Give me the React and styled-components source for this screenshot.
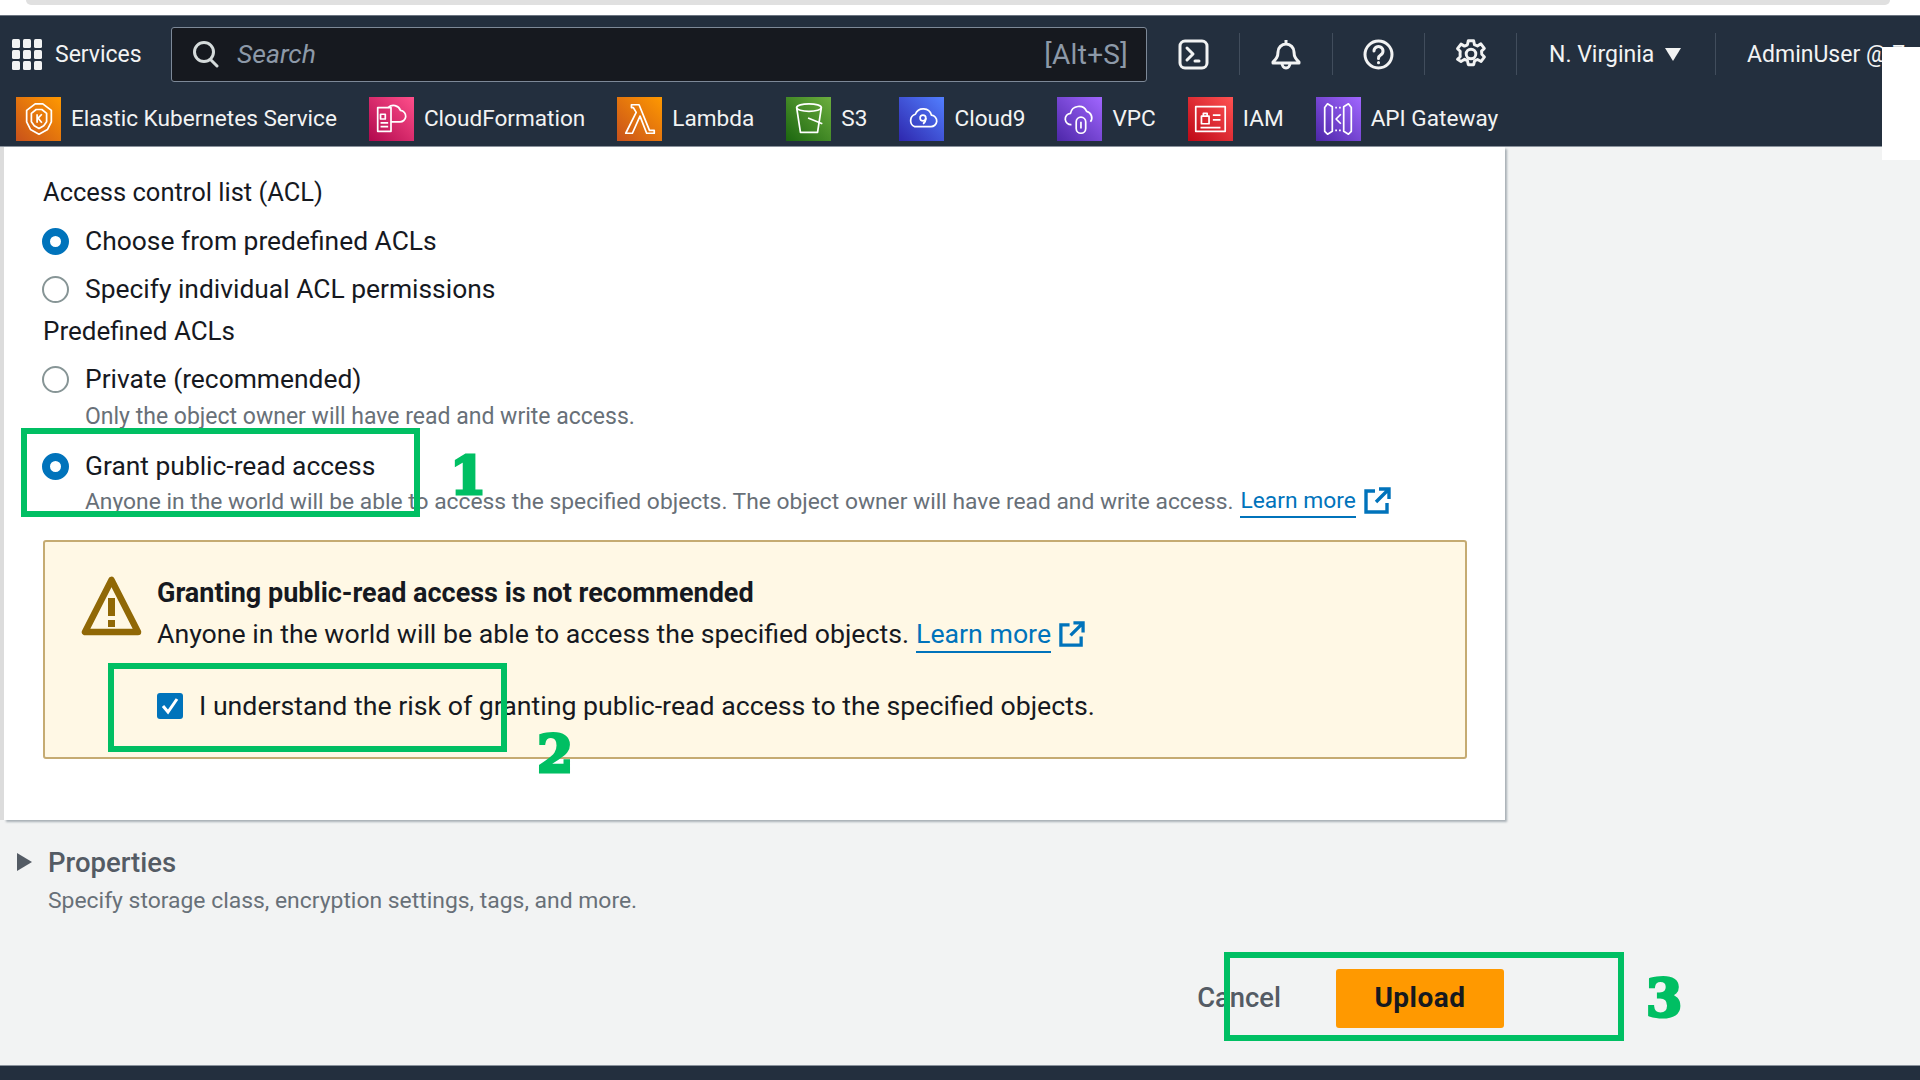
import React from 'react';
import styled, { createGlobalStyle } from 'styled-components';

const GlobalStyle = createGlobalStyle`
  html, body { margin: 0; padding: 0; background: #f2f3f3; }
  body { font-family: Roboto, "Noto Sans", "Liberation Sans", sans-serif; }
`;

const Page = styled.div`
  position: relative;
  width: 1920px;
  height: 1080px;
  overflow: hidden;
  background: #f2f3f3;
  display: flex;
  flex-direction: column;
`;

const TopStrip = styled.div`
  height: 15px;
  flex: none;
  background: #fff;
  padding: 0 30px 0 26px;
  box-sizing: border-box;
`;

const StripBar = styled.div`
  height: 5px;
  background: #e0e0e0;
  border-radius: 0 0 10px 10px;
`;

const Nav = styled.header`
  flex: none;
  height: 132px;
  background: #232f3e;
  border-top: 1px solid #6b7480;
  border-bottom: 1px solid #8a929c;
  box-sizing: border-box;
  color: #f2f3f3;
`;

const NavTop = styled.div`
  height: 76px;
  display: flex;
  align-items: center;
  padding-left: 12px;
`;

const Services = styled.div`
  width: 159px;
  flex: none;
  display: flex;
  align-items: center;
  gap: 13px;
  font-size: 23px;
`;

const SearchBox = styled.div`
  width: 976px;
  height: 55px;
  flex: none;
  box-sizing: border-box;
  background: #16191f;
  border: 1.5px solid #7d8998;
  border-radius: 3px;
  display: flex;
  align-items: center;
  padding: 0 18px 0 20px;
  gap: 18px;
`;

const SearchHint = styled.span`
  flex: 1;
  font-size: 26.5px;
  font-style: italic;
  color: #8d99a8;
  margin-bottom: 2px;
`;

const Shortcut = styled.span`
  font-size: 28px;
  letter-spacing: 0.3px;
  color: #8d99a8;
`;

const IconCell = styled.div`
  width: ${p => p.$w}px;
  height: 42px;
  flex: none;
  box-sizing: border-box;
  display: flex;
  align-items: center;
  justify-content: center;
  border-right: 1px solid #414d5c;
`;

const Region = styled.div`
  width: 199px;
  height: 42px;
  flex: none;
  box-sizing: border-box;
  padding-left: 32px;
  display: flex;
  align-items: center;
  gap: 11px;
  font-size: 23px;
  border-right: 1px solid #414d5c;
`;

const Caret = styled.span`
  width: 0;
  height: 0;
  border-left: 8px solid transparent;
  border-right: 8px solid transparent;
  border-top: 13px solid #f2f3f3;
`;

const UserName = styled.div`
  padding-left: 31px;
  font-size: 23px;
  white-space: nowrap;
`;

const Shortcuts = styled.div`
  height: 54px;
  display: flex;
  align-items: center;
  padding-left: 16px;
  gap: 32px;
`;

const ShortcutItem = styled.div`
  display: flex;
  align-items: center;
  gap: 10px;
  font-size: 22.6px;
  white-space: nowrap;
`;

const ShortcutLabel = styled.span`
  margin-bottom: 2px;
`;

const ServiceTile = styled.div`
  width: 45px;
  height: 44px;
  flex: none;
  display: flex;
  align-items: center;
  justify-content: center;
  background: linear-gradient(45deg, ${p => p.$from}, ${p => p.$to});
`;

const Panel = styled.section`
  flex: none;
  width: 1501px;
  height: 673px;
  margin-left: 4px;
  box-sizing: border-box;
  background: #fff;
  box-shadow: 2px 2px 2px #a9b0b6, -4px 0 0 #dcdcdc;
  padding: 25px 38px 0 39px;
`;

const Label = styled.div`
  height: 40px;
  margin-top: ${p => p.$top || 0}px;
  display: flex;
  align-items: center;
  font-size: ${p => p.$size}px;
  color: #16191f;
`;

const RadioRow = styled.div`
  height: 40px;
  margin-top: ${p => p.$top || 0}px;
  display: flex;
  align-items: center;
  gap: 16px;
  margin-left: -1px;
  font-size: 26.4px;
  color: #16191f;
`;

const Radio = styled.span`
  width: 27px;
  height: 27px;
  flex: none;
  box-sizing: border-box;
  border-radius: 50%;
  background: #fff;
  border: ${p => (p.$on ? '8px solid #0073bb' : '2px solid #879596')};
`;

const Hint = styled.div`
  height: 30px;
  margin-top: ${p => p.$top || 0}px;
  padding-left: 42px;
  display: flex;
  align-items: center;
  font-size: ${p => p.$size}px;
  color: #687078;
  white-space: nowrap;
`;

const Link = styled.span`
  color: #0073bb;
  border-bottom: 2px solid #0073bb;
  line-height: 1.3em;
  padding-top: 2px;
  margin-left: 7px;
`;

const LinkIcon = styled.svg`
  margin-left: 7px;
  flex: none;
`;

const Alert = styled.div`
  height: 219px;
  margin-top: 24px;
  box-sizing: border-box;
  background: #fff8e5;
  border: 2px solid #c5ab72;
  border-radius: 3px;
  padding: 32px 0 0 36px;
  display: grid;
  grid-template-columns: 61px 1fr;
  column-gap: 15px;
  align-content: start;
`;

const AlertBody = styled.div`
  display: flex;
  flex-direction: column;
`;

const AlertTitle = styled.div`
  height: 38px;
  display: flex;
  align-items: center;
  font-size: 27px;
  font-weight: 700;
  color: #16191f;
`;

const AlertText = styled.div`
  height: 44px;
  display: flex;
  align-items: center;
  font-size: 26.7px;
  color: #16191f;
`;

const CheckRow = styled.div`
  height: 40px;
  margin-top: 30px;
  display: flex;
  align-items: center;
  gap: 16px;
  font-size: 26.7px;
  color: #16191f;
`;

const CheckBox = styled.span`
  width: 26px;
  height: 26px;
  flex: none;
  border-radius: 3px;
  background: #0073bb;
  display: flex;
  align-items: center;
  justify-content: center;
`;

const Properties = styled.div`
  flex: none;
  height: 100px;
  padding: 22px 0 0 17px;
  box-sizing: border-box;
`;

const PropTitle = styled.div`
  height: 40px;
  display: flex;
  align-items: center;
  gap: 16px;
  font-size: 27.5px;
  font-weight: 500;
  color: #545b64;
`;

const PropArrow = styled.span`
  width: 0;
  height: 0;
  border-top: 9px solid transparent;
  border-bottom: 9px solid transparent;
  border-left: 15px solid #545b64;
`;

const PropHint = styled.div`
  height: 36px;
  padding-left: 31px;
  display: flex;
  align-items: center;
  font-size: 22.9px;
  color: #687078;
`;

const Actions = styled.div`
  flex: none;
  width: 1504px;
  margin-top: 49px;
  display: flex;
  justify-content: flex-end;
  align-items: center;
  gap: 55px;
`;

const CancelText = styled.span`
  font-size: 27.4px;
  font-weight: 500;
  color: #545b64;
  margin-bottom: 2px;
`;

const UploadButton = styled.div`
  width: 168px;
  height: 59px;
  box-sizing: border-box;
  padding-bottom: 2px;
  border-radius: 3px;
  background: #ff9900;
  color: #16191f;
  font-size: 28px;
  letter-spacing: 0.5px;
  font-weight: 700;
  display: flex;
  align-items: center;
  justify-content: center;
`;

const Footer = styled.footer`
  position: absolute;
  left: 0;
  right: 0;
  bottom: 0;
  height: 15px;
  box-sizing: border-box;
  background: #232f3e;
  border-top: 1px solid #8a929c;
`;

const Mask = styled.div`
  position: absolute;
  left: 1882px;
  top: 47px;
  width: 38px;
  height: 113px;
  background: #fff;
`;

const GreenBox = styled.div`
  position: absolute;
  left: ${p => p.$x}px;
  top: ${p => p.$y}px;
  width: ${p => p.$w}px;
  height: ${p => p.$h}px;
  box-sizing: border-box;
  border: 6px solid #00bf63;
`;

const Step = styled.div`
  position: absolute;
  left: ${p => p.$x}px;
  top: ${p => p.$y}px;
  font-family: "DejaVu Serif", serif;
  font-weight: 700;
  font-size: 52px;
  line-height: 26px;
  color: #00bf63;
  -webkit-text-stroke: 3px #00bf63;
`;

const shortcuts = [
  ['Elastic Kubernetes Service', '#c8511b', '#ff9900', 'eks'],
  ['CloudFormation', '#b0084d', '#ff4f8b', 'cfn'],
  ['Lambda', '#c8511b', '#ff9900', 'lambda'],
  ['S3', '#1b660f', '#6cae3e', 's3'],
  ['Cloud9', '#2e27ad', '#527fff', 'cloud9'],
  ['VPC', '#4d27a8', '#a166ff', 'vpc'],
  ['IAM', '#bd0816', '#ff5252', 'iam'],
  ['API Gateway', '#4d27a8', '#a166ff', 'api'],
];

const glyphs = {
  eks: (
    <>
      <path d="M16 5h8l9 7v12l-4 8-9 5-9-5-4-8V12z" />
      <path d="M17 11h6l5 4v9l-3 4-5 3-5-3-3-4v-9z" />
      <path d="M18 16v9M23 16l-4 4 4 5" />
    </>
  ),
  cfn: (
    <>
      <rect x="6" y="9" width="14" height="25" />
      <path d="M9 16h5v5H9zM9 25h8M9 29h8" />
      <path d="M20 24h9a6 6 0 0 0 1-12 8 8 0 0 0-13-3" />
    </>
  ),
  lambda: <path d="M11 6h8l11 27h5v3h-8L20 18l-8 18H5l11-22-3-5h-2z" />,
  s3: (
    <>
      <ellipse cx="20" cy="9" rx="13" ry="4" />
      <path d="M7 9l4 26h18l4-26" />
      <path d="M19 20l15 6" />
    </>
  ),
  cloud9: (
    <>
      <path d="M12 29h17a6 6 0 0 0 1-12 9 9 0 0 0-17-1 7 7 0 0 0-1 13z" />
      <circle cx="21" cy="20" r="3" />
      <path d="M24 20c0 3-1 5-3 6" />
    </>
  ),
  vpc: (
    <>
      <path d="M11 27a6 6 0 0 1-1-12 9 9 0 0 1 17-2 7 7 0 0 1 4 11" />
      <rect x="16" y="19" width="10" height="17" rx="5" />
      <path d="M21 24v7" />
    </>
  ),
  iam: (
    <>
      <rect x="5" y="8" width="31" height="26" />
      <rect x="11" y="18" width="8" height="8" />
      <path d="M13 18v-3h4v3M23 17h8M23 22h8M10 30h21" />
    </>
  ),
  api: (
    <>
      <path d="M9 5l5 3v26l-5 3-3-3V9zM31 5l-5 3v26l5 3 3-3V9z" />
      <path d="M18 8v2M22 8v2M18 32v2M22 32v2M23 16l-5 5 5 5" />
    </>
  ),
};

function ServiceGlyph({ name }) {
  return (
    <svg width="38" height="40" viewBox="0 0 40 42" fill="none" stroke="#fff" strokeWidth="1.8" strokeLinejoin="round">
      {glyphs[name]}
    </svg>
  );
}

function GridIcon() {
  const cells = [0, 11, 22];
  return (
    <svg width="30" height="31" viewBox="0 0 30 31" fill="#f2f3f3">
      {cells.map(y => cells.map(x => <rect key={`${x}-${y}`} x={x} y={y} width="8" height="9" rx="1.5" />))}
    </svg>
  );
}

function SearchIcon() {
  return (
    <svg width="27" height="28" viewBox="0 0 27 28" fill="none" stroke="#d5dbdb" strokeWidth="3" strokeLinecap="round">
      <circle cx="12" cy="12" r="9.5" />
      <path d="M19 20l6 6" />
    </svg>
  );
}

function TerminalIcon() {
  return (
    <svg width="31" height="31" viewBox="0 0 31 31" fill="none" stroke="#f2f3f3" strokeWidth="3" strokeLinecap="round" strokeLinejoin="round">
      <rect x="2" y="2" width="27" height="27" rx="5" />
      <path d="M9 9l6 6-6 6M17 22h4" />
    </svg>
  );
}

function BellIcon() {
  return (
    <svg width="32" height="32" viewBox="0 0 32 32" fill="none" stroke="#f2f3f3" strokeWidth="3" strokeLinejoin="round">
      <path d="M16 2v3M8 14a8 8 0 0 1 16 0c0 5 2 7 5 10v1H3v-1c3-3 5-5 5-10z" />
      <path d="M12 25a4 5 0 0 0 8 0" />
    </svg>
  );
}

function HelpIcon() {
  return (
    <svg width="31" height="31" viewBox="0 0 31 31" fill="none" stroke="#f2f3f3" strokeWidth="3" strokeLinecap="round">
      <circle cx="15.5" cy="15.5" r="13.5" />
      <path d="M11 12a4.5 4.5 0 1 1 6.8 3.9c-1.6 1-2.3 1.8-2.3 3.6" />
      <path d="M15.5 23.5v.3" />
    </svg>
  );
}

function GearIcon() {
  return (
    <svg width="32" height="32" viewBox="0 0 24 24" fill="none" stroke="#f2f3f3" strokeWidth="2.2" strokeLinejoin="round">
      <path d="M10 2h4l.6 3 2.2 1 2.6-1.6 2.6 3.4-2.1 2 .1 1.2.1 1.2 2 2-2.5 3.4-2.7-1.5-2.2 1-.7 2.9h-4l-.7-3-2.1-1-2.7 1.6L1.9 16l2-2-.1-2 .1-2-2-2 2.6-3.4 2.6 1.5 2.2-1z" />
      <circle cx="12" cy="12" r="3.6" />
    </svg>
  );
}

function ExternalIcon({ size }) {
  return (
    <LinkIcon width={size} height={size} viewBox="0 0 28 28" fill="none" stroke="#0073bb" strokeWidth="3.4">
      <path d="M12 4H3v21h21v-9" />
      <path d="M13 15L25 3M16 2h10v10" />
    </LinkIcon>
  );
}

function WarningIcon() {
  return (
    <svg width="61" height="62" viewBox="0 0 61 62" fill="none">
      <path d="M30.5 6L4 58h53z" stroke="#906806" strokeWidth="6.5" strokeLinejoin="round" />
      <rect x="27" y="24" width="7" height="18" fill="#906806" />
      <rect x="27" y="46" width="7" height="7" fill="#906806" />
    </svg>
  );
}

export default function App() {
  return (
    <Page>
      <GlobalStyle />
      <TopStrip><StripBar /></TopStrip>
      <Nav>
        <NavTop>
          <Services><GridIcon />Services</Services>
          <SearchBox>
            <SearchIcon />
            <SearchHint>Search</SearchHint>
            <Shortcut>[Alt+S]</Shortcut>
          </SearchBox>
          <IconCell $w={93}><TerminalIcon /></IconCell>
          <IconCell $w={93}><BellIcon /></IconCell>
          <IconCell $w={92}><HelpIcon /></IconCell>
          <IconCell $w={92}><GearIcon /></IconCell>
          <Region>N. Virginia<Caret /></Region>
          <UserName>AdminUser @ 7</UserName>
        </NavTop>
        <Shortcuts>
          {shortcuts.map(([label, from, to, glyph]) => (
            <ShortcutItem key={label}>
              <ServiceTile $from={from} $to={to}><ServiceGlyph name={glyph} /></ServiceTile>
              <ShortcutLabel>{label}</ShortcutLabel>
            </ShortcutItem>
          ))}
        </Shortcuts>
      </Nav>

      <Panel>
        <Label $size={25.5}>Access control list (ACL)</Label>
        <RadioRow $top={9}><Radio $on />Choose from predefined ACLs</RadioRow>
        <RadioRow $top={8}><Radio />Specify individual ACL permissions</RadioRow>
        <Label $top={2} $size={26}>Predefined ACLs</Label>
        <RadioRow $top={8}><Radio />Private (recommended)</RadioRow>
        <Hint $top={2} $size={23}>Only the object owner will have read and write access.</Hint>
        <RadioRow $top={15}><Radio $on />Grant public-read access</RadioRow>
        <Hint $size={22.8}>
          Anyone in the world will be able to access the specified objects. The object owner will have read and write access.
          <Link>Learn more</Link>
          <ExternalIcon size={28} />
        </Hint>
        <Alert>
          <WarningIcon />
          <AlertBody>
            <AlertTitle>Granting public-read access is not recommended</AlertTitle>
            <AlertText>
              Anyone in the world will be able to access the specified objects.
              <Link>Learn more</Link>
              <ExternalIcon size={27} />
            </AlertText>
            <CheckRow>
              <CheckBox>
                <svg width="18" height="18" viewBox="0 0 18 18" fill="none" stroke="#fff" strokeWidth="3">
                  <path d="M2 9l5 6 9-13" />
                </svg>
              </CheckBox>
              I understand the risk of granting public-read access to the specified objects.
            </CheckRow>
          </AlertBody>
        </Alert>
      </Panel>

      <Properties>
        <PropTitle><PropArrow />Properties</PropTitle>
        <PropHint>Specify storage class, encryption settings, tags, and more.</PropHint>
      </Properties>

      <Actions>
        <CancelText>Cancel</CancelText>
        <UploadButton>Upload</UploadButton>
      </Actions>

      <Footer />
      <Mask />

      <GreenBox $x={21} $y={428} $w={399} $h={89} />
      <GreenBox $x={108} $y={663} $w={399} $h={89} />
      <GreenBox $x={1224} $y={952} $w={400} $h={89} />
      <Step $x={450} $y={463}>1</Step>
      <Step $x={537} $y={741}>2</Step>
      <Step $x={1646} $y={985}>3</Step>
    </Page>
  );
}
